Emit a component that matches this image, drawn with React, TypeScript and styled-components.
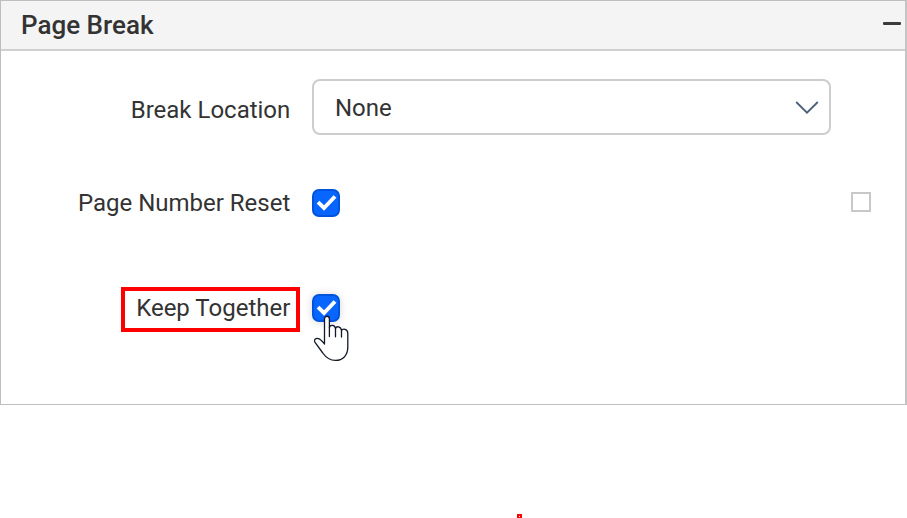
import React from 'react';
import styled, { createGlobalStyle } from 'styled-components';

const GlobalStyle = createGlobalStyle`
  *, *::before, *::after { box-sizing: border-box; }
  body { margin: 0; background: #fff; overflow: hidden; }
`;

const Page = styled.main`
  height: 518px;
  display: flex;
  flex-direction: column;
  justify-content: space-between;
  overflow: hidden;
  font-family: Roboto, 'Liberation Sans', sans-serif;
  color: #333;
`;

const Panel = styled.section`
  height: 405px;
  border: 1px solid #bebebe;
  border-right: 2px solid #c4c4c4;
`;

const PanelHeader = styled.header`
  height: 50px;
  padding: 0 4px 0 20px;
  display: flex;
  justify-content: space-between;
  background: #f4f4f4;
  border-bottom: 2px solid #d0d0d0;
`;

const Title = styled.h2`
  margin: 0;
  font-size: 26px;
  font-weight: 500;
  line-height: 49px;
`;

const CollapseButton = styled.button`
  width: 18px;
  height: 3px;
  margin-top: 21px;
  padding: 0;
  border: 0;
  border-radius: 1px;
  background: #3b3b3b;
`;

const Form = styled.div`
  padding-top: 28px;
`;

const Row = styled.div<{ $height: number; $gapAfter: number }>`
  height: ${(p) => p.$height}px;
  margin-bottom: ${(p) => p.$gapAfter}px;
  padding-right: 34px;
  display: grid;
  grid-template-columns: 299px 519px 1fr;
  column-gap: 12px;
  align-items: center;
`;

const Label = styled.label<{ $highlighted?: boolean; $drop?: number }>`
  justify-self: end;
  margin-top: ${(p) => p.$drop ?? 0}px;
  height: ${(p) => (p.$highlighted ? 45 : 28)}px;
  padding: ${(p) => (p.$highlighted ? '0 5.7px 3px 11px' : '0 9.7px 0 0')};
  border: ${(p) => (p.$highlighted ? '4px solid #f00' : '0')};
  font-size: 24px;
  line-height: ${(p) => (p.$highlighted ? 34 : 28)}px;
  white-space: nowrap;
`;

const SelectBox = styled.div`
  height: 56px;
  padding: 1px 10px 0 21px;
  display: flex;
  align-items: center;
  justify-content: space-between;
  border: 2px solid #cdcdcd;
  border-radius: 8px;
  font-size: 24px;
  line-height: 28px;
`;

const SelectValue = styled.span`
  padding-top: 1px;
`;

const Checkbox = styled.span<{ $hovered?: boolean }>`
  position: relative;
  display: block;
  width: 28px;
  height: 28px;
  margin-bottom: ${(p) => (p.$hovered ? 4 : 0)}px;
  border: 2px solid #0054db;
  border-radius: 7px;
  background: #0866ff;
  box-shadow: ${(p) => (p.$hovered ? '0 0 8px rgba(0, 0, 0, 0.16)' : 'none')};

  > svg { display: block; }
`;

const EmptyBox = styled.span`
  justify-self: end;
  width: 20px;
  height: 20px;
  margin-bottom: 2px;
  border: 2px solid #c8c8c8;
`;

const Pointer = styled.svg`
  position: absolute;
  left: 0;
  top: 18px;
`;

const Marker = styled.span`
  width: 5px;
  height: 4px;
  margin-left: 517px;
  border: 2px solid #f00;
  border-bottom-width: 1px;
`;

const Chevron = () => (
  <svg width="24" height="16" viewBox="0 0 24 16" fill="none">
    <path d="M1.2 2 12 12.7 22.8 2" stroke="#4b6078" strokeWidth="1.8" />
  </svg>
);

const Tick = () => (
  <svg width="24" height="24" viewBox="0 0 24 24" fill="none">
    <path d="M4 11.2 10 17 21 5.5" stroke="#fff" strokeWidth="3.9" />
  </svg>
);

const HandPointer = () => (
  <Pointer width="38" height="50" viewBox="0 0 38 50">
    <path
      d="M10.5 30V4.8C10.5 1.4 15.4 1.4 15.4 4.8V13.6C16 10.4 20.9 10.6 21.5 14.6C22.4 11.8 26.8 12.2 27.5 16.3C29.2 13.9 33.8 15.2 33.8 19.5V33C33.8 41.6 28.6 46.4 21.5 46.4C15.6 46.4 11.8 43.3 8.8 39L.9 28.2C-.5 25.9 1.7 23.9 4.3 24.6C7 25.3 8.8 27.8 10.5 30Z"
      fill="#fff" stroke="#111827" strokeWidth="1.3" strokeLinejoin="round"
    />
    <path d="M15.4 13.6v9M21.5 14.6v8.2M27.5 16.3v6.8" fill="none" stroke="#111827" strokeWidth="1.3" strokeLinecap="round" />
  </Pointer>
);

export default function App() {
  return (
    <>
      <GlobalStyle />
      <Page>
        <Panel>
          <PanelHeader>
            <Title>Page Break</Title>
            <CollapseButton aria-label="Collapse" />
          </PanelHeader>
          <Form>
            <Row $height={56} $gapAfter={54}>
              <Label $drop={5}>Break Location</Label>
              <SelectBox>
                <SelectValue>None</SelectValue>
                <Chevron />
              </SelectBox>
            </Row>
            <Row $height={28} $gapAfter={70}>
              <Label>Page Number Reset</Label>
              <Checkbox><Tick /></Checkbox>
              <EmptyBox />
            </Row>
            <Row $height={45} $gapAfter={0}>
              <Label $highlighted>Keep Together</Label>
              <Checkbox $hovered>
                <Tick />
                <HandPointer />
              </Checkbox>
            </Row>
          </Form>
        </Panel>
        <Marker />
      </Page>
    </>
  );
}
